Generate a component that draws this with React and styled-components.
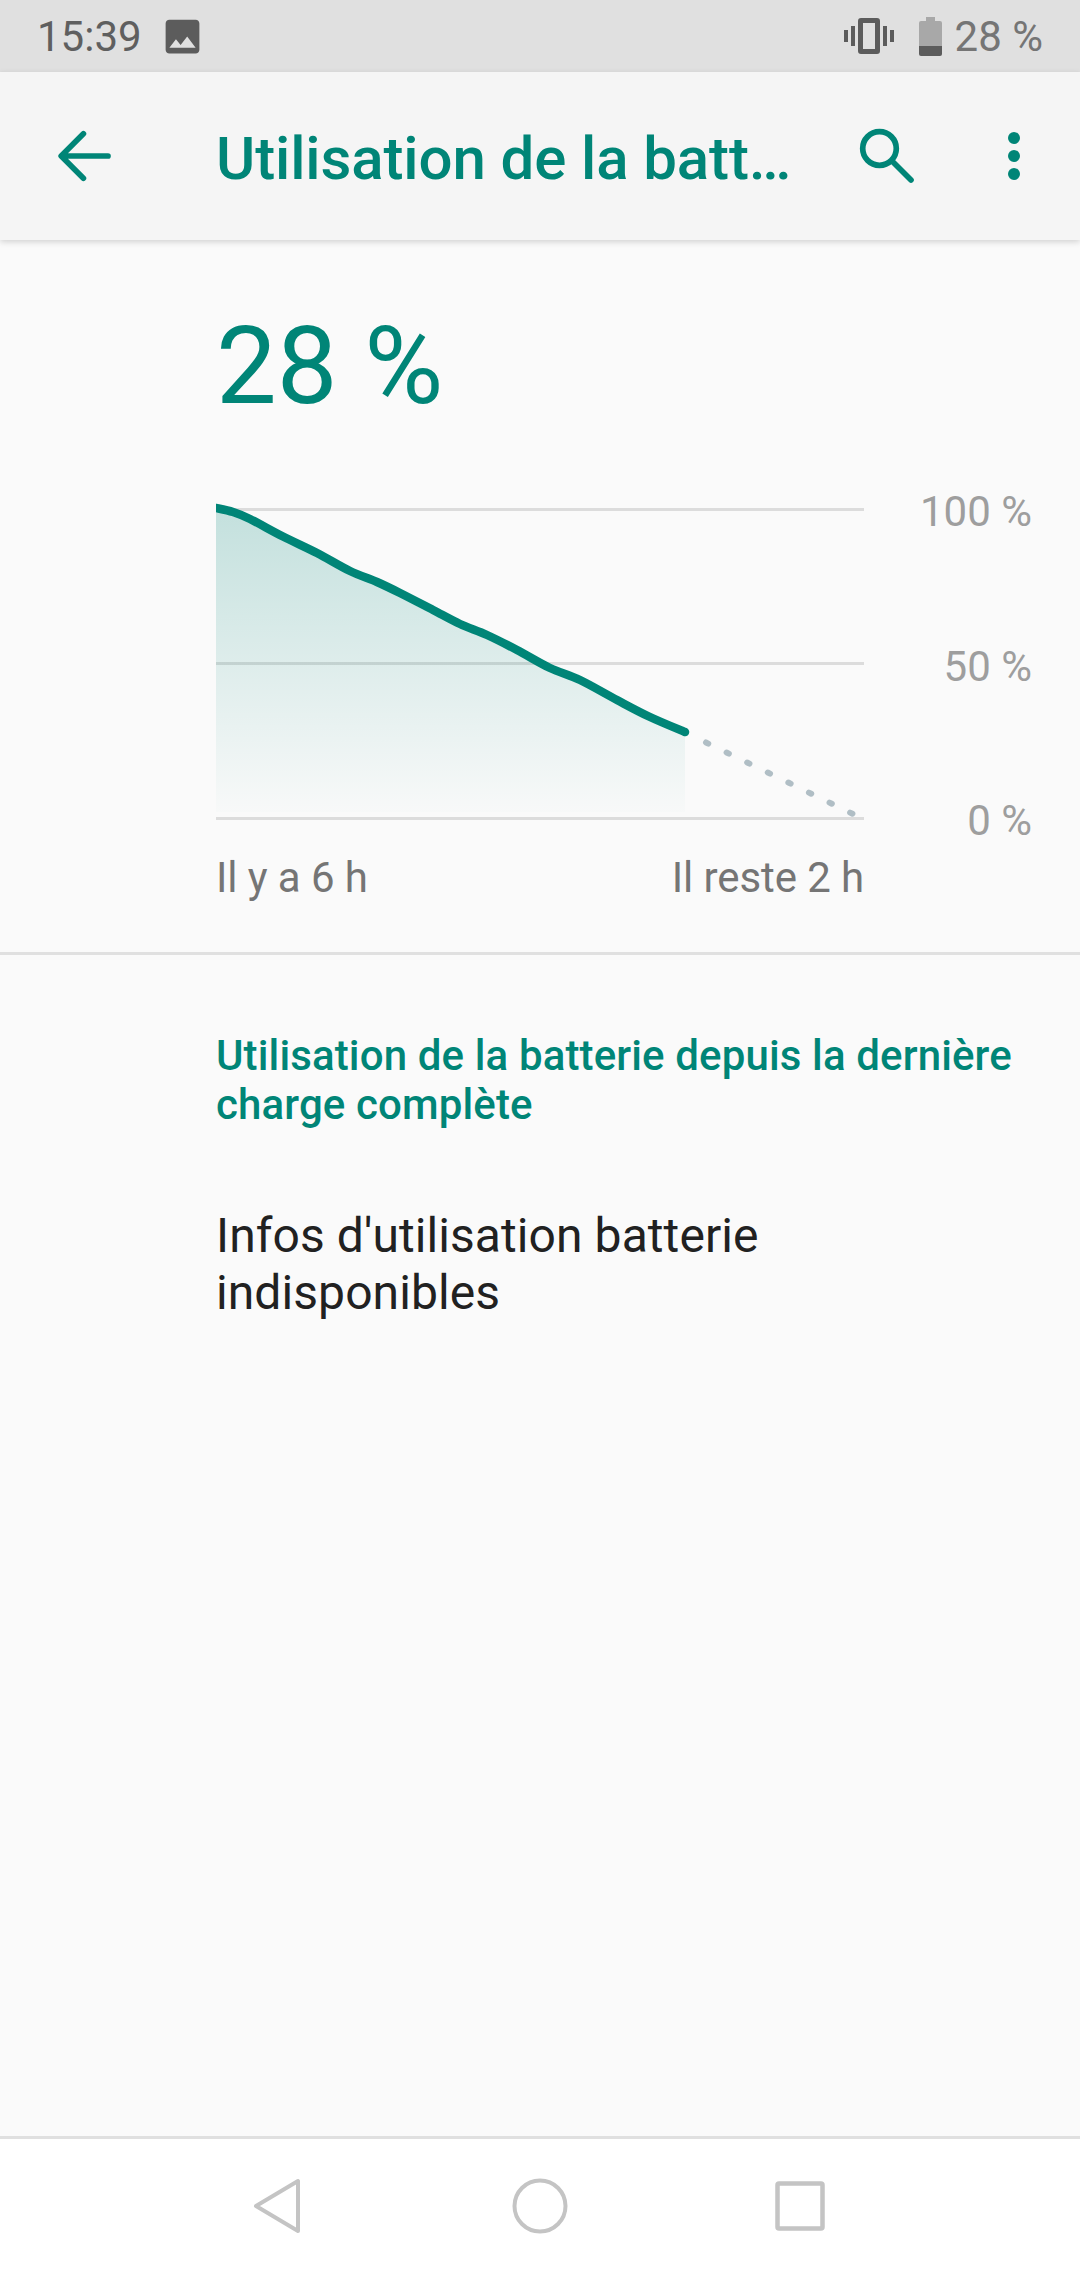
import React from 'react';
import styled, { createGlobalStyle } from 'styled-components';

const TEAL = '#008577';

const GlobalStyle = createGlobalStyle`
  html, body {
    margin: 0;
    padding: 0;
    background: #fafafa;
  }
  * {
    box-sizing: border-box;
  }
`;

const Screen = styled.div`
  width: 1080px;
  height: 2280px;
  display: flex;
  flex-direction: column;
  overflow: hidden;
  font-family: Roboto, "Liberation Sans", sans-serif;
  background: #fafafa;
`;

const StatusBar = styled.div`
  height: 72px;
  flex: none;
  display: flex;
  align-items: center;
  justify-content: space-between;
  padding: 0 37px;
  background: #e0e0e0;
  font-size: 42px;
`;

const StatusGroup = styled.div`
  display: flex;
  align-items: center;
`;

const StatusTime = styled.span`
  color: #5f5f5f;
`;

const StatusLevel = styled.span`
  margin-left: 13px;
  color: #757575;
`;

const StatusIcon = styled.svg`
  display: block;
  flex: none;
  margin-left: ${(p) => p.$gap || 0}px;
`;

const Toolbar = styled.header`
  position: relative;
  z-index: 1;
  height: 168px;
  flex: none;
  display: flex;
  align-items: center;
  background: #f5f5f5;
  box-shadow: 0 2px 6px rgba(0, 0, 0, 0.16);
`;

const ToolIcon = styled.svg`
  display: block;
  flex: none;
  margin-left: ${(p) => p.$left}px;
`;

const ToolTitle = styled.h1`
  width: 574px;
  margin: 5px 0 0 96px;
  white-space: nowrap;
  color: ${TEAL};
  font-size: 60px;
  font-weight: 500;
  letter-spacing: -0.12px;
  line-height: 80px;
`;

const Summary = styled.section`
  flex: none;
  padding: 0 48px 0 216px;
  border-bottom: 3px solid #e0e0e0;
  height: 715px;
`;

const Level = styled.div`
  padding-top: 63px;
  height: 247px;
  color: ${TEAL};
  font-size: 108px;
  line-height: 127px;
`;

const ChartRow = styled.div`
  display: flex;
  height: 359px;
`;

const ChartSvg = styled.svg`
  display: block;
  flex: none;
`;

const ScaleColumn = styled.div`
  flex: 1;
  display: flex;
  flex-direction: column;
  justify-content: space-between;
  align-items: flex-end;
  color: #9e9e9e;
  font-size: 42px;
  line-height: 50px;
`;

const TimeRow = styled.div`
  width: 648px;
  margin-top: 7px;
  display: flex;
  justify-content: space-between;
  color: #757575;
  font-size: 42px;
  letter-spacing: -0.1px;
  line-height: 50px;
`;

const Details = styled.section`
  flex: 1;
  padding: 0 30px 0 216px;
`;

const SectionTitle = styled.h2`
  margin: 0;
  padding-top: 76px;
  color: ${TEAL};
  font-size: 42px;
  font-weight: 500;
  letter-spacing: 0.13px;
  line-height: 49px;
`;

const Message = styled.p`
  margin: 0;
  padding-top: 78px;
  width: 620px;
  color: #212121;
  font-size: 48px;
  letter-spacing: 0.08px;
  line-height: 57px;
`;

const NavBar = styled.nav`
  height: 144px;
  flex: none;
  display: flex;
  align-items: center;
  padding-bottom: 8px;
  background: #fff;
  border-top: 3px solid #e0e0e0;
`;

const NavIcon = styled.svg`
  display: block;
  flex: none;
  margin-left: ${(p) => p.$left}px;
  fill: none;
  stroke: #c4c4c4;
  stroke-linejoin: round;
`;

const POINTS = [
  [212, 507.5], [216, 508], [233, 512], [250, 519], [283, 536.5], [317, 553], [350, 571], [377, 582],
  [400, 593], [433, 610], [460, 624], [487, 635], [517, 650], [550, 668], [580, 680], [617, 700],
  [650, 717], [685, 732],
];

// catmull-rom through the samples, gives the soft curve of the real graph
function smoothPath(pts) {
  let d = `M${pts[0][0]} ${pts[0][1]}`;
  for (let i = 0; i < pts.length - 1; i++) {
    const p0 = pts[i - 1] || pts[i];
    const p1 = pts[i];
    const p2 = pts[i + 1];
    const p3 = pts[i + 2] || p2;
    const c1 = [p1[0] + (p2[0] - p0[0]) / 6, p1[1] + (p2[1] - p0[1]) / 6];
    const c2 = [p2[0] - (p3[0] - p1[0]) / 6, p2[1] - (p3[1] - p1[1]) / 6];
    d += ` C${c1[0]} ${c1[1]} ${c2[0]} ${c2[1]} ${p2[0]} ${p2[1]}`;
  }
  return d;
}

function BatteryChart() {
  const line = smoothPath(POINTS);
  return (
    <ChartSvg width="648" height="359" viewBox="216 487 648 359">
      <defs>
        <linearGradient id="chartFill" x1="0" y1="0" x2="0" y2="1">
          <stop offset="0" stopColor={TEAL} stopOpacity="0.22" />
          <stop offset="1" stopColor={TEAL} stopOpacity="0.01" />
        </linearGradient>
      </defs>
      <g fill="#dcdcdc">
        <rect x="216" y="508" width="648" height="3" />
        <rect x="216" y="662" width="648" height="3" />
        <rect x="216" y="817" width="648" height="3" />
      </g>
      <path d={`${line} L685 812 L216 812 Z`} fill="url(#chartFill)" />
      <path d={line} fill="none" stroke={TEAL} strokeWidth="8.5" strokeLinecap="round" />
      <path
        d="M706 742.5 L854 814.5"
        fill="none"
        stroke="#b0bec5"
        strokeWidth="6"
        strokeLinecap="round"
        strokeDasharray="2.5 20.4"
      />
    </ChartSvg>
  );
}

export default function App() {
  return (
    <Screen>
      <GlobalStyle />
      <StatusBar>
        <StatusGroup>
          <StatusTime>15:39</StatusTime>
          <StatusIcon $gap={18} width="45" height="45" viewBox="0 0 24 24" fill="#5c5c5c">
            <path d="M21 19V5c0-1.1-.9-2-2-2H5c-1.1 0-2 .9-2 2v14c0 1.1.9 2 2 2h14c1.1 0 2-.9 2-2zM8.5 13.5l2.5 3.01L14.5 12l4.5 6H5l3.5-4.5z" />
          </StatusIcon>
        </StatusGroup>
        <StatusGroup>
          <StatusIcon width="50" height="38" viewBox="0 0 50 38" fill="#5c5c5c">
            <path d="M14 4a3 3 0 0 1 3-3h16a3 3 0 0 1 3 3v30a3 3 0 0 1-3 3H17a3 3 0 0 1-3-3zM19 6v26h12V6z" fillRule="evenodd" />
            <rect x="7" y="9" width="4" height="20" />
            <rect x="0" y="13" width="4" height="12" />
            <rect x="39" y="9" width="4" height="20" />
            <rect x="46" y="13" width="4" height="12" />
          </StatusIcon>
          <StatusIcon $gap={25} width="23" height="39" viewBox="0 0 23 39">
            <path d="M7 0h9v4h5a2 2 0 0 1 2 2v24H0V6a2 2 0 0 1 2-2h5z" fill="#a8a8a8" />
            <path d="M0 29h23v8a2 2 0 0 1-2 2H2a2 2 0 0 1-2-2z" fill="#5c5c5c" />
          </StatusIcon>
          <StatusLevel>28 %</StatusLevel>
        </StatusGroup>
      </StatusBar>

      <Toolbar>
        <ToolIcon $left={48} width="72" height="72" viewBox="0 0 24 24" fill="none" stroke={TEAL} strokeWidth="1.9" strokeLinecap="round" strokeLinejoin="round">
          <path d="M20 12H4.6M11.8 4.6 4.4 12l7.4 7.4" />
        </ToolIcon>
        <ToolTitle>Utilisation de la batt…</ToolTitle>
        <ToolIcon $left={61} width="72" height="72" viewBox="0 0 24 24" fill="none" stroke={TEAL} strokeWidth="1.9" strokeLinecap="round">
          <circle cx="9.5" cy="9.5" r="5.6" />
          <path d="m14 14 6 6" />
        </ToolIcon>
        <ToolIcon $left={55} width="72" height="72" viewBox="0 0 72 72" fill={TEAL}>
          <circle cx="36" cy="18" r="6" />
          <circle cx="36" cy="36" r="6" />
          <circle cx="36" cy="54" r="6" />
        </ToolIcon>
      </Toolbar>

      <Summary>
        <Level>28 %</Level>
        <ChartRow>
          <BatteryChart />
          <ScaleColumn>
            <span>100 %</span>
            <span>50 %</span>
            <span>0 %</span>
          </ScaleColumn>
        </ChartRow>
        <TimeRow>
          <span>Il y a 6 h</span>
          <span>Il reste 2 h</span>
        </TimeRow>
      </Summary>

      <Details>
        <SectionTitle>Utilisation de la batterie depuis la dernière charge complète</SectionTitle>
        <Message>Infos d'utilisation batterie indisponibles</Message>
      </Details>

      <NavBar>
        <NavIcon $left={253} width="48" height="56" viewBox="0 0 48 56" strokeWidth="4">
          <path d="M45 3v50L3 28z" />
        </NavIcon>
        <NavIcon $left={211} width="56" height="56" viewBox="0 0 56 56" strokeWidth="4">
          <circle cx="28" cy="28" r="25.5" />
        </NavIcon>
        <NavIcon $left={207} width="50" height="50" viewBox="0 0 50 50" strokeWidth="4.5">
          <rect x="2.5" y="2.5" width="45" height="45" rx="1.5" />
        </NavIcon>
      </NavBar>
    </Screen>
  );
}
